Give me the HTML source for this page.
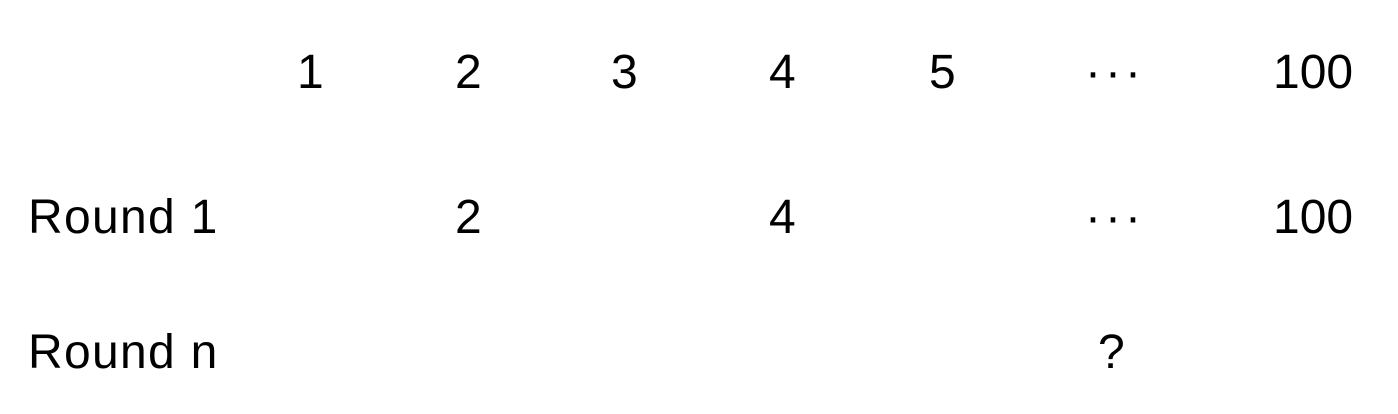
<!DOCTYPE html>
<html><head><meta charset="utf-8"><style>
html,body{margin:0;padding:0;background:#fff;}
body{width:1398px;height:414px;position:relative;overflow:hidden;font-family:"Liberation Sans",sans-serif;font-size:48px;color:#000;}
div{position:absolute;line-height:48px;white-space:nowrap;}
.d{letter-spacing:4px;margin-left:-3px;}
.r{letter-spacing:1.3px;}
</style></head><body>
<div style="left:297px;top:49px">1</div>
<div style="left:455px;top:49px">2</div>
<div style="left:611px;top:49px">3</div>
<div style="left:769px;top:49px">4</div>
<div style="left:929px;top:49px">5</div>
<div class="d" style="left:1088px;top:49px">···</div>
<div style="left:1273px;top:49px">100</div>

<div class="r" style="left:28px;top:194px">Round 1</div>
<div style="left:455px;top:194px">2</div>
<div style="left:769px;top:194px">4</div>
<div class="d" style="left:1088px;top:194px">···</div>
<div style="left:1273px;top:194px">100</div>

<div class="r" style="left:28px;top:329px">Round n</div>
<div style="left:1098px;top:329px">?</div>
</body></html>
